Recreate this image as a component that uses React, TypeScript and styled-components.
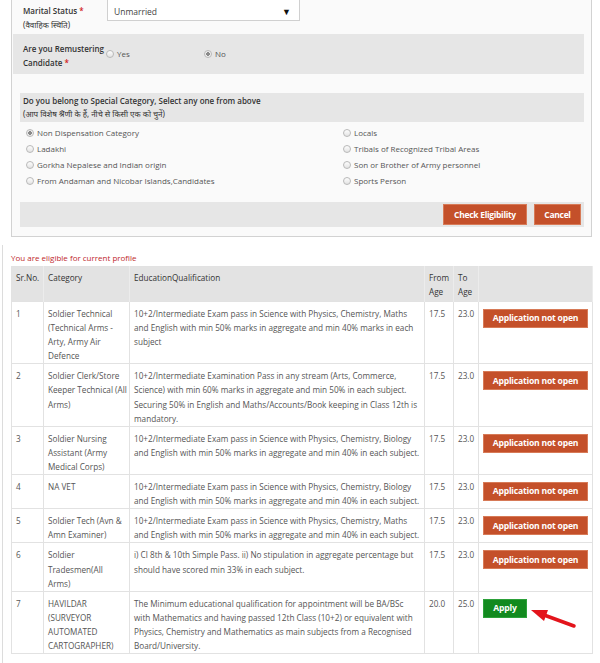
import React from "react";
import styled, { createGlobalStyle } from "styled-components";

const GlobalStyle = createGlobalStyle`
  body {
    margin: 0;
    background: #fff;
    font-family: "Open Sans", "Noto Sans", sans-serif;
    color: #444;
  }
`;

const Page = styled.div`
  width: 600px;
  height: 663px;
  overflow: hidden;
`;

const FormPanel = styled.div`
  margin: -10px 0 0 11px;
  width: 581px;
  box-sizing: border-box;
  border: 1px solid #d2d2d2;
  background: #fafafa;
  padding: 0 7px 9px 1px;
`;

const MaritalRow = styled.div`
  display: flex;
  align-items: flex-start;
  height: 43px;
  padding-left: 10px;
`;

const FieldLabel = styled.div<{ $top?: number }>`
  width: 84px;
  flex-shrink: 0;
  padding-top: ${(p) => p.$top ?? 0}px;
  font-size: 8px;
  line-height: 13.5px;
  font-weight: 600;
  color: #333;
`;

const Hindi = styled.div`
  font-weight: 400;
  font-family: "Noto Sans", "Open Sans", sans-serif;
`;

const Required = styled.span`
  color: #d21a1a;
  margin-left: 2px;
`;

const SelectBox = styled.div`
  margin-top: 7px;
  width: 193px;
  height: 23px;
  box-sizing: border-box;
  border: 1px solid #d0d0d0;
  background: #fff;
  display: flex;
  align-items: center;
  justify-content: space-between;
  padding: 3px 8px 0 6px;
  font-size: 8.5px;
  color: #444;
`;

const Caret = styled.span`
  font-size: 9px;
  color: #111;
`;

const RemusterRow = styled.div`
  display: flex;
  align-items: center;
  height: 40px;
  background: #e6e6e6;
  padding-left: 10px;
`;

const RadioOption = styled.label<{ $width?: number }>`
  display: flex;
  align-items: center;
  gap: 3px;
  width: ${(p) => (p.$width ? `${p.$width}px` : "auto")};
  font-size: 8px;
  color: #555;
  line-height: 16px;
`;

const RadioDot = styled.span<{ $checked?: boolean }>`
  width: 6px;
  height: 6px;
  border-radius: 50%;
  border: 1px solid #b9b9b9;
  background: ${(p) =>
    p.$checked
      ? "radial-gradient(circle, #8a8a8a 0 1.6px, #eee 2px)"
      : "linear-gradient(#fdfdfd, #e3e3e3)"};
  flex-shrink: 0;
`;

const CategoryHead = styled.div`
  margin: 19px 0 0 7px;
  background: #e6e6e6;
  padding: 1px 3px 2px;
  font-size: 8px;
  line-height: 13px;
  color: #333;
`;

const Strong = styled.div`
  font-weight: 600;
`;

const RadioGrid = styled.div`
  display: grid;
  grid-template-columns: 317px 1fr;
  margin: 3px 0 0 13px;
`;

const ButtonBar = styled.div`
  margin: 13px 0 0 7px;
  height: 25px;
  background: #e6e6e6;
  display: flex;
  align-items: center;
  justify-content: flex-end;
  gap: 7px;
  padding-right: 3px;
`;

const OrangeButton = styled.button<{ $width: number }>`
  width: ${(p) => p.$width}px;
  height: 21px;
  border: 1px solid #d77a57;
  background: #c4502a;
  color: #fff;
  font-family: "Open Sans", sans-serif;
  font-weight: 700;
  font-size: 8.5px;
  letter-spacing: -0.3px;
  padding: 0;
`;

const Results = styled.div`
  margin: 8px 0 0 2px;
  border-left: 1px solid #dcdcdc;
  padding: 6px 0 0 8px;
  height: 430px;
`;

const EligibleNote = styled.div`
  font-size: 8px;
  line-height: 14px;
  color: #c0282b;
  margin-bottom: 1px;
`;

const Table = styled.table`
  width: 581px;
  border-collapse: collapse;
  table-layout: fixed;
  font-size: 8.2px;
  line-height: 14.1px;
  border: 1px solid #e2e2e2;
`;

const HeadCell = styled.th`
  background: #e3e3e3;
  text-align: left;
  vertical-align: top;
  font-weight: 400;
  color: #333;
  line-height: 14px;
  padding: 4px 4px 2px;
  border-right: 1px solid #ececec;
`;

const Cell = styled.td`
  position: relative;
  vertical-align: top;
  padding: 5px 4px 0;
  border: 1px solid #e2e2e2;
  color: #555;
  white-space: nowrap;
`;

const StatusButton = styled.div<{ $open?: boolean }>`
  width: ${(p) => (p.$open ? 44 : 105)}px;
  height: 19px;
  margin-top: 2px;
  background: ${(p) => (p.$open ? "#128a1f" : "#c4502a")};
  border: 1px solid ${(p) => (p.$open ? "#2ca13a" : "#d77a57")};
  box-sizing: border-box;
  color: #fff;
  font-weight: 700;
  font-size: 8.6px;
  letter-spacing: -0.2px;
  display: flex;
  align-items: center;
  justify-content: center;
`;

const Pointer = styled.svg`
  position: absolute;
  left: 48px;
  top: 12px;
`;

interface Post {
  no: string;
  category: string[];
  qualification: string[];
  from: string;
  to: string;
  open?: boolean;
}

const posts: Post[] = [
  {
    no: "1",
    category: ["Soldier Technical", "(Technical Arms -", "Arty, Army Air", "Defence"],
    qualification: [
      "10+2/Intermediate Exam pass in Science with Physics, Chemistry, Maths",
      "and English with min 50% marks in aggregate and min 40% marks in each",
      "subject",
    ],
    from: "17.5",
    to: "23.0",
  },
  {
    no: "2",
    category: ["Soldier Clerk/Store", "Keeper Technical (All", "Arms)"],
    qualification: [
      "10+2/Intermediate Examination Pass in any stream (Arts, Commerce,",
      "Science) with min 60% marks in aggregate and min 50% in each subject.",
      "Securing 50% in English and Maths/Accounts/Book keeping in Class 12th is",
      "mandatory.",
    ],
    from: "17.5",
    to: "23.0",
  },
  {
    no: "3",
    category: ["Soldier Nursing", "Assistant (Army", "Medical Corps)"],
    qualification: [
      "10+2/Intermediate Exam pass in Science with Physics, Chemistry, Biology",
      "and English with min 50% marks in aggregate and min 40% in each subject.",
    ],
    from: "17.5",
    to: "23.0",
  },
  {
    no: "4",
    category: ["NA VET"],
    qualification: [
      "10+2/Intermediate Exam pass in Science with Physics, Chemistry, Biology",
      "and English with min 50% marks in aggregate and min 40% in each subject.",
    ],
    from: "17.5",
    to: "23.0",
  },
  {
    no: "5",
    category: ["Soldier Tech (Avn &", "Amn Examiner)"],
    qualification: [
      "10+2/Intermediate Exam pass in Science with Physics, Chemistry, Maths",
      "and English with min 50% marks in aggregate and min 40% in each subject.",
    ],
    from: "17.5",
    to: "23.0",
  },
  {
    no: "6",
    category: ["Soldier", "Tradesmen(All", "Arms)"],
    qualification: [
      "i) Cl 8th & 10th Simple Pass. ii) No stipulation in aggregate percentage but",
      "should have scored min 33% in each subject.",
    ],
    from: "17.5",
    to: "23.0",
  },
  {
    no: "7",
    category: ["HAVILDAR", "(SURVEYOR", "AUTOMATED", "CARTOGRAPHER)"],
    qualification: [
      "The Minimum educational qualification for appointment will be BA/BSc",
      "with Mathematics and having passed 12th Class (10+2) or equivalent with",
      "Physics, Chemistry and Mathematics as main subjects from a Recognised",
      "Board/University.",
    ],
    from: "20.0",
    to: "25.0",
    open: true,
  },
];

const specialLeft = [
  "Non Dispensation Category",
  "Ladakhi",
  "Gorkha Nepalese and Indian origin",
  "From Andaman and Nicobar Islands,Candidates",
];
const specialRight = [
  "Locals",
  "Tribals of Recognized Tribal Areas",
  "Son or Brother of Army personnel",
  "Sports Person",
];

function Lines({ items }: { items: string[] }) {
  return (
    <>
      {items.map((t, i) => (
        <div key={i}>{t}</div>
      ))}
    </>
  );
}

export default function App() {
  return (
    <Page>
      <GlobalStyle />
      <FormPanel>
        <MaritalRow>
          <FieldLabel $top={13}>
            Marital Status<Required>*</Required>
            <Hindi>(वैवाहिक स्थिति)</Hindi>
          </FieldLabel>
          <SelectBox>
            Unmarried
            <Caret>▼</Caret>
          </SelectBox>
        </MaritalRow>

        <RemusterRow>
          <FieldLabel $top={4} style={{ width: 83, lineHeight: "14px" }}>
            Are you Remustering
            <br />
            Candidate<Required>*</Required>
          </FieldLabel>
          <RadioOption $width={98}>
            <RadioDot /> Yes
          </RadioOption>
          <RadioOption>
            <RadioDot $checked /> No
          </RadioOption>
        </RemusterRow>

        <CategoryHead>
          <Strong>Do you belong to Special Category, Select any one from above</Strong>
          <Hindi>(आप विशेष श्रेणी के हैं, नीचे से किसी एक को चुनें)</Hindi>
        </CategoryHead>

        <RadioGrid>
          {specialLeft.map((item, i) => (
            <React.Fragment key={item}>
              <RadioOption>
                <RadioDot $checked={i === 0} /> {item}
              </RadioOption>
              <RadioOption>
                <RadioDot /> {specialRight[i]}
              </RadioOption>
            </React.Fragment>
          ))}
        </RadioGrid>

        <ButtonBar>
          <OrangeButton $width={84}>Check Eligibility</OrangeButton>
          <OrangeButton $width={47}>Cancel</OrangeButton>
        </ButtonBar>
      </FormPanel>

      <Results>
        <EligibleNote>You are eligible for current profile</EligibleNote>
        <Table>
          <colgroup>
            <col style={{ width: 32 }} />
            <col style={{ width: 86 }} />
            <col style={{ width: 295 }} />
            <col style={{ width: 29 }} />
            <col style={{ width: 25 }} />
            <col style={{ width: 114 }} />
          </colgroup>
          <thead>
            <tr>
              <HeadCell>Sr.No.</HeadCell>
              <HeadCell>Category</HeadCell>
              <HeadCell>EducationQualification</HeadCell>
              <HeadCell>
                From
                <br />
                Age
              </HeadCell>
              <HeadCell>
                To
                <br />
                Age
              </HeadCell>
              <HeadCell />
            </tr>
          </thead>
          <tbody>
            {posts.map((p) => (
              <tr key={p.no}>
                <Cell>{p.no}</Cell>
                <Cell>
                  <Lines items={p.category} />
                </Cell>
                <Cell>
                  <Lines items={p.qualification} />
                </Cell>
                <Cell>{p.from}</Cell>
                <Cell>{p.to}</Cell>
                <Cell>
                  {p.open ? (
                    <>
                      <StatusButton $open>Apply</StatusButton>
                      <Pointer width="50" height="26" viewBox="0 0 50 26">
                        <line x1="17" y1="11" x2="47" y2="22" stroke="#e3141b" strokeWidth="3.5" strokeLinecap="round" />
                        <polygon points="4,6 21,6 17,17" fill="#e3141b" />
                      </Pointer>
                    </>
                  ) : (
                    <StatusButton>Application not open</StatusButton>
                  )}
                </Cell>
              </tr>
            ))}
          </tbody>
        </Table>
      </Results>
    </Page>
  );
}
